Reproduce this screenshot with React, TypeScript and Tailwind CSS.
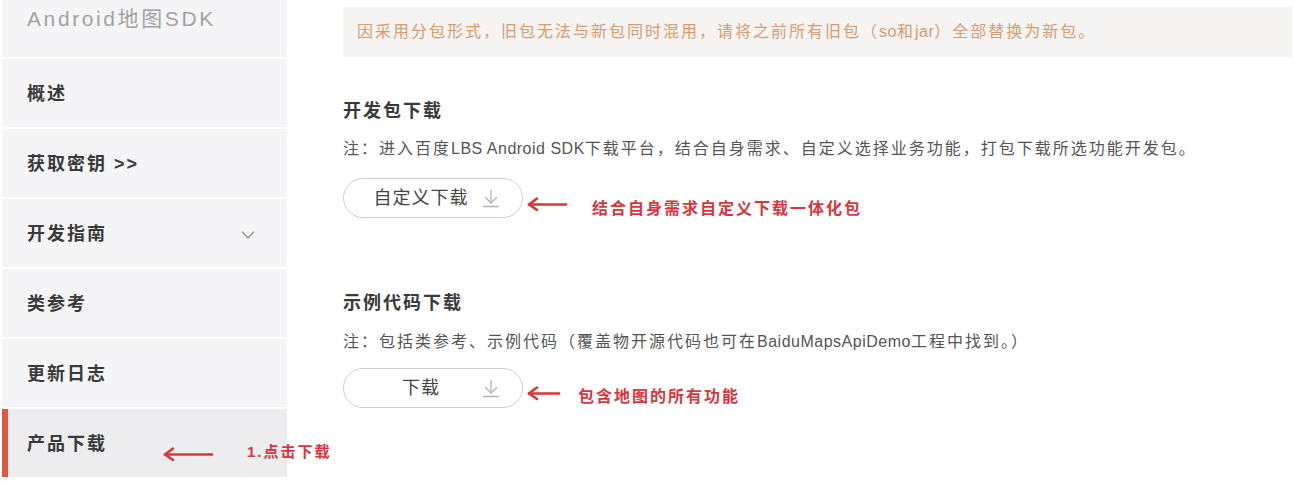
import { ChevronDown } from 'lucide-react'

const font = "font-['Liberation_Sans','Noto_Sans_CJK_SC',sans-serif]"

function DownIcon() {
  return (
    <svg width="18" height="19" viewBox="0 0 18 19" fill="none" stroke="#b3b3b3" strokeWidth="1.3" strokeLinecap="round" strokeLinejoin="round">
      <path d="M9 1.5V14" />
      <path d="M3.5 8.5L9 14l5.5-5.5" />
      <path d="M1.5 17.5h15" />
    </svg>
  )
}

function RedArrow({ w }: { w: number }) {
  return (
    <svg width={w} height="16" viewBox={`0 0 ${w} 16`} fill="none" stroke="#d8363d" strokeWidth="2.6" strokeLinecap="round" strokeLinejoin="round">
      <path d={`M3 8.5H${w - 2}`} />
      <path d="M11 2.5L3 8.5l8 5.5" />
    </svg>
  )
}

const menu = [
  { label: '概述' },
  { label: '获取密钥 >>' },
  { label: '开发指南', chevron: true },
  { label: '类参考' },
  { label: '更新日志' },
  { label: '产品下载', active: true },
]

function Sidebar() {
  return (
    <aside className="ml-[2px] w-[285px] shrink-0 flex flex-col gap-[2px]">
      <div className="h-[57px] bg-[#f5f5f7] pl-[25px] pt-[5px] text-[21px] leading-[28px] tracking-[2.6px] text-[#a2a2a2]">
        Android地图SDK
      </div>
      {menu.map((m) => (
        <div
          key={m.label}
          className={
            'relative h-[68px] flex items-center pl-[25px] pr-[28px] pt-[3px] ' +
            (m.active ? 'bg-[#ededef]' : 'bg-[#f5f5f7]')
          }
        >
          {m.active && <div className="absolute left-0 top-0 bottom-0 w-[6px] bg-[#e0573f]" />}
          <span className="flex-1 text-[18px] font-semibold tracking-[2px] text-[#3a3a3a]">{m.label}</span>
          {m.chevron && <ChevronDown size={22} strokeWidth={1.5} className="text-[#8e8e8e]" />}
        </div>
      ))}
    </aside>
  )
}

function Latin({ children }: { children: string }) {
  return <span className="tracking-[0.5px]">{children}</span>
}

function DownloadButton({ label }: { label: string }) {
  return (
    <button className="w-[180px] h-[40px] rounded-full border border-[#cfcfcf] bg-white flex items-center pl-[16px] pr-[22px]">
      <span className="flex-1 text-center text-[18px] tracking-[1px] text-[#444]">{label}</span>
      <DownIcon />
    </button>
  )
}

function Main() {
  return (
    <main className="flex-1 ml-[56px] mr-[2px] pt-[7px]">
      <div className="h-[50px] bg-[#f5f4f2] flex items-center pl-[14px] text-[16px] tracking-[2px] text-[#d79c70]">
        因采用分包形式，旧包无法与新包同时混用，请将之前所有旧包（<Latin>so</Latin>和<Latin>jar</Latin>）全部替换为新包。
      </div>

      <h2 className="mt-[42px] text-[18px] leading-[24px] font-semibold tracking-[2px] text-[#3a3a3a]">开发包下载</h2>
      <p className="mt-[15px] text-[16px] leading-[22px] tracking-[2px] text-[#555]">
        注：进入百度<Latin>LBS Android SDK</Latin>下载平台，结合自身需求、自定义选择业务功能，打包下载所选功能开发包。
      </p>
      <div className="mt-[15px] flex items-center">
        <DownloadButton label="自定义下载" />
        <div className="ml-[3px] mt-[12px]">
          <RedArrow w={42} />
        </div>
        <span className="ml-[24px] mt-[22px] text-[16px] font-bold tracking-[2px] text-[#d8363d]">结合自身需求自定义下载一体化包</span>
      </div>

      <h2 className="mt-[70px] text-[18px] leading-[24px] font-semibold tracking-[2px] text-[#3a3a3a]">示例代码下载</h2>
      <p className="mt-[16px] text-[16px] leading-[22px] tracking-[2px] text-[#555]">
        注：包括类参考、示例代码（覆盖物开源代码也可在<Latin>BaiduMapsApiDemo</Latin>工程中找到。）
      </p>
      <div className="mt-[14px] flex items-center">
        <DownloadButton label="下载" />
        <div className="ml-[3px] mt-[10px]">
          <RedArrow w={35} />
        </div>
        <span className="ml-[17px] mt-[18px] text-[16px] font-bold tracking-[2px] text-[#d8363d]">包含地图的所有功能</span>
      </div>
    </main>
  )
}

export default function App() {
  return (
    <div className={`relative w-[1294px] h-[484px] bg-white overflow-hidden flex ${font}`}>
      <Sidebar />
      <Main />
      <div className="absolute left-[162px] top-[444px] flex items-center">
        <RedArrow w={52} />
        <span className="ml-[33px] -mt-[3px] text-[15px] font-bold tracking-[2px] text-[#d8363d]">1.点击下载</span>
      </div>
    </div>
  )
}
